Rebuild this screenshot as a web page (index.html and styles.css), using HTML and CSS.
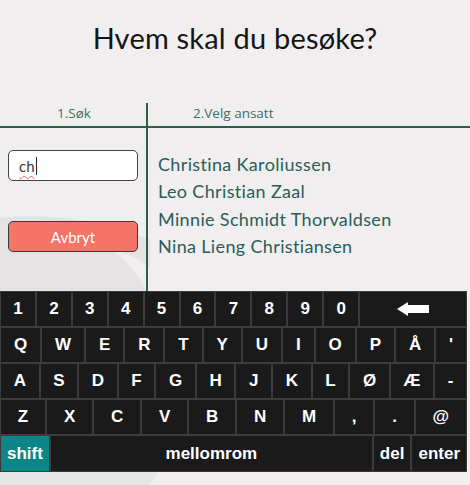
FILE: index.html
```
<!DOCTYPE html>
<html lang="no">

<head>
    <meta charset="UTF-8">
    <meta name="viewport" content="width=device-width, initial-scale=1.0">
    <title>Hvem skal du besøke?</title>
    <link rel="stylesheet" href="styles.css">
</head>

<body>
    <svg class="backdrop" width="470" height="485" viewBox="0 0 470 485">
        <path d="M0,218 C50,212 110,222 150,240 L150,268 C138,258 124,251 112,250 C128,262 140,276 146,291 L0,291 Z" fill="#e4e2e3" />
        <path d="M0,470 L160,470 L149,485 L0,485 Z" fill="#e6e6e6" />
    </svg>

    <header class="title">
        <h1>Hvem skal du besøke?</h1>
    </header>

    <main class="visit">
        <div class="step step-search">1.Søk</div>
        <div class="step step-pick">2.Velg ansatt</div>

        <div class="pane-search">
            <div class="search-field"><span class="typed">ch</span><span class="caret"></span></div>
            <button class="cancel">Avbryt</button>
        </div>

        <ul class="results">
            <li>Christina Karoliussen</li>
            <li>Leo Christian Zaal</li>
            <li>Minnie Schmidt Thorvaldsen</li>
            <li>Nina Lieng Christiansen</li>
        </ul>
    </main>

    <div class="keyboard">
        <div class="row row-digits">
            <span class="key">1</span>
            <span class="key">2</span>
            <span class="key">3</span>
            <span class="key">4</span>
            <span class="key">5</span>
            <span class="key">6</span>
            <span class="key">7</span>
            <span class="key">8</span>
            <span class="key">9</span>
            <span class="key">0</span>
            <span class="key backspace">
                <svg width="32" height="14" viewBox="0 0 32 14">
                    <polygon points="0,7 11,0 11,3 32,3 32,11 11,11 11,14" fill="#fff" />
                </svg>
            </span>
        </div>
        <div class="row">
            <span class="key">Q</span>
            <span class="key">W</span>
            <span class="key">E</span>
            <span class="key">R</span>
            <span class="key">T</span>
            <span class="key">Y</span>
            <span class="key">U</span>
            <span class="key">I</span>
            <span class="key">O</span>
            <span class="key">P</span>
            <span class="key">Å</span>
            <span class="key">'</span>
        </div>
        <div class="row">
            <span class="key">A</span>
            <span class="key">S</span>
            <span class="key">D</span>
            <span class="key">F</span>
            <span class="key">G</span>
            <span class="key">H</span>
            <span class="key">J</span>
            <span class="key">K</span>
            <span class="key">L</span>
            <span class="key">Ø</span>
            <span class="key">Æ</span>
            <span class="key">-</span>
        </div>
        <div class="row">
            <span class="key">Z</span>
            <span class="key">X</span>
            <span class="key">C</span>
            <span class="key">V</span>
            <span class="key">B</span>
            <span class="key">N</span>
            <span class="key">M</span>
            <span class="key">,</span>
            <span class="key">.</span>
            <span class="key">@</span>
        </div>
        <div class="row row-bottom">
            <span class="key shift">shift</span>
            <span class="key space">mellomrom</span>
            <span class="key">del</span>
            <span class="key">enter</span>
        </div>
    </div>
</body>

</html>
```

FILE: styles.css
```
body {
    background-color: #f0eeef;
    margin: 0;
    padding: 0;
    font-family: Lato, "Open Sans", sans-serif;
    position: relative;
    overflow: hidden;
    height: 485px;
}

.backdrop {
    position: absolute;
    top: 0;
    left: 0;
    z-index: 0;
}

.title,
.visit,
.keyboard {
    position: relative;
    z-index: 1;
}

.title {
    height: 103px;
    padding-top: 20px;
    box-sizing: border-box;
    text-align: center;
}

.title h1 {
    margin: 0;
    font-size: 29px;
    font-weight: 400;
    line-height: 36px;
    color: #151515;
    letter-spacing: 0.2px;
}

.visit {
    display: grid;
    grid-template-columns: 148px 1fr;
    grid-template-rows: 25px 163px;
}

.step {
    font-family: "Open Sans", Lato, sans-serif;
    font-size: 13.5px;
    color: #3e6f62;
    line-height: 21px;
    border-bottom: 2px solid #2f5e48;
    box-sizing: border-box;
}

.step-search {
    text-align: center;
    border-right: 2px solid #2f5e48;
    padding-left: 2px;
}

.step-pick {
    padding-left: 45px;
}

.pane-search {
    border-right: 2px solid #2f5e48;
    padding: 22px 8px 0 8px;
}

.search-field {
    height: 31px;
    box-sizing: border-box;
    background-color: #fff;
    border: 1.5px solid #444;
    border-radius: 5px;
    padding-left: 10px;
    display: flex;
    align-items: center;
    font-size: 15px;
    color: #3a3a3a;
}

.typed {
    text-decoration: underline wavy #e06666;
    text-decoration-thickness: 1px;
    text-underline-offset: 3px;
}

.caret {
    width: 1px;
    height: 18px;
    background-color: #222;
    margin-left: 1px;
}

.cancel {
    display: block;
    width: 100%;
    height: 31px;
    margin-top: 40px;
    background-color: #f47467;
    border: 1px solid #3a3a3a;
    border-radius: 5px;
    color: #fff;
    font-family: Lato, "Open Sans", sans-serif;
    font-size: 15px;
}

.results {
    list-style: none;
    margin: 0;
    padding: 23px 0 0 10px;
}

.results li {
    font-size: 18px;
    line-height: 27.4px;
    letter-spacing: 0.35px;
    color: #2b5d57;
}

.keyboard {
    width: 467px;
    height: 181px;
    background-color: #191919;
    display: flex;
    flex-direction: column;
    font-family: "Liberation Sans", Arial, sans-serif;
    font-weight: bold;
    font-size: 17px;
    color: #fff;
}

.row {
    display: flex;
    height: 36px;
}

.row-bottom {
    height: 37px;
}

.key {
    flex: 1 1 auto;
    display: flex;
    align-items: center;
    justify-content: center;
    padding: 0 6px;
    border: 1px solid #3b3b3b;
    background-color: #1a1a1a;
}

.row-digits .key {
    flex: 1 1 0;
}

.row-digits .backspace {
    flex: 0 0 108px;
    box-sizing: border-box;
}

.row-bottom .key {
    flex: 0 0 auto;
}

.row-bottom .space {
    flex: 1 1 auto;
}

.shift {
    background-color: #0b8585;
}
```
